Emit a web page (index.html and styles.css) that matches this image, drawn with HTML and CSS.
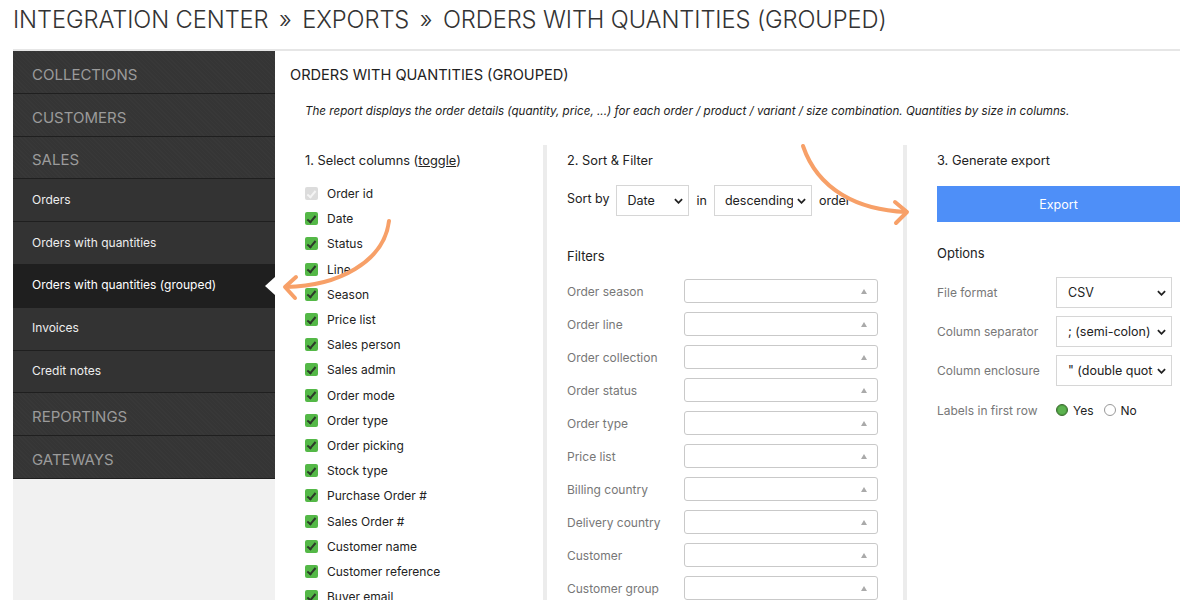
FILE: index.html
```
<html>
<head>
    <title>Integration Center - Exports</title>
    <link rel="stylesheet" href="styles.css">
</head>
<body>
    <h1 class="crumbs">INTEGRATION CENTER <span class="sep">&raquo;</span> EXPORTS <span class="sep">&raquo;</span> ORDERS WITH QUANTITIES (GROUPED)</h1>

    <div class="layout">
        <aside class="sidebar">
            <nav class="nav">
                <a class="nav-cat">COLLECTIONS</a>
                <a class="nav-cat">CUSTOMERS</a>
                <a class="nav-cat">SALES</a>
                <a class="nav-item">Orders</a>
                <a class="nav-item">Orders with quantities</a>
                <a class="nav-item active">Orders with quantities (grouped)</a>
                <a class="nav-item">Invoices</a>
                <a class="nav-item">Credit notes</a>
                <a class="nav-cat">REPORTINGS</a>
                <a class="nav-cat">GATEWAYS</a>
            </nav>
        </aside>

        <main class="content">
            <h2 class="page-title">ORDERS WITH QUANTITIES (GROUPED)</h2>
            <p class="desc">The report displays the order details (quantity, price, ...) for each order / product / variant / size combination. Quantities by size in columns.</p>

            <div class="columns">
                <section class="col col-columns">
                    <h3>1. Select columns (<u>toggle</u>)</h3>
                    <ul class="checks">
                        <li><span class="cb disabled"></span>Order id</li>
                        <li><span class="cb"></span>Date</li>
                        <li><span class="cb"></span>Status</li>
                        <li><span class="cb"></span>Line</li>
                        <li><span class="cb"></span>Season</li>
                        <li><span class="cb"></span>Price list</li>
                        <li><span class="cb"></span>Sales person</li>
                        <li><span class="cb"></span>Sales admin</li>
                        <li><span class="cb"></span>Order mode</li>
                        <li><span class="cb"></span>Order type</li>
                        <li><span class="cb"></span>Order picking</li>
                        <li><span class="cb"></span>Stock type</li>
                        <li><span class="cb"></span>Purchase Order #</li>
                        <li><span class="cb"></span>Sales Order #</li>
                        <li><span class="cb"></span>Customer name</li>
                        <li><span class="cb"></span>Customer reference</li>
                        <li><span class="cb"></span>Buyer email</li>
                    </ul>
                </section>

                <section class="col col-filter">
                    <h3>2. Sort &amp; Filter</h3>
                    <div class="sort-row">
                        <span class="sort-label">Sort by</span>
                        <span class="select sel-date"><span class="val">Date</span><svg class="chev" viewBox="0 0 10 6"><path d="M1 1l4 4 4-4"/></svg></span>
                        <span>in</span>
                        <span class="select sel-order"><span class="val">descending</span><svg class="chev" viewBox="0 0 10 6"><path d="M1 1l4 4 4-4"/></svg></span>
                        <span>order</span>
                    </div>

                    <h4>Filters</h4>
                    <div class="filters">
                        <label>Order season</label><span class="combo"></span>
                        <label>Order line</label><span class="combo"></span>
                        <label>Order collection</label><span class="combo"></span>
                        <label>Order status</label><span class="combo"></span>
                        <label>Order type</label><span class="combo"></span>
                        <label>Price list</label><span class="combo"></span>
                        <label>Billing country</label><span class="combo"></span>
                        <label>Delivery country</label><span class="combo"></span>
                        <label>Customer</label><span class="combo"></span>
                        <label>Customer group</label><span class="combo"></span>
                    </div>
                </section>

                <section class="col col-export">
                    <h3>3. Generate export</h3>
                    <button class="export-btn">Export</button>

                    <h4>Options</h4>
                    <div class="options">
                        <label>File format</label>
                        <span class="select"><span class="val">CSV</span><svg class="chev" viewBox="0 0 10 6"><path d="M1 1l4 4 4-4"/></svg></span>
                        <label>Column separator</label>
                        <span class="select"><span class="val">; (semi-colon)</span><svg class="chev" viewBox="0 0 10 6"><path d="M1 1l4 4 4-4"/></svg></span>
                        <label>Column enclosure</label>
                        <span class="select"><span class="val">" (double quote)</span><svg class="chev" viewBox="0 0 10 6"><path d="M1 1l4 4 4-4"/></svg></span>
                        <label class="radio-label">Labels in first row</label>
                        <span class="radios">
                            <span class="radio on"></span>Yes
                            <span class="radio"></span>No
                        </span>
                    </div>
                </section>
            </div>
        </main>
    </div>

    <!-- annotation arrows drawn over the page -->
    <svg class="arrows" width="1200" height="600" viewBox="0 0 1200 600">
        <path d="M389 221 C 384 262, 338 286, 286 287"/>
        <path d="M296 277 L 285 287 L 295 298"/>
        <path d="M803 146 C 818 190, 858 210, 906 212"/>
        <path d="M895 202 L 907 212 L 896 223"/>
    </svg>
</body>
</html>
```

FILE: styles.css
```
body {
    margin: 0;
    background: #fff;
    font-family: 'Inter', 'Liberation Sans', sans-serif;
    color: #222;
    height: 600px;
    overflow: hidden;
    position: relative;
}
.crumbs {
    margin: 0;
    padding: 5px 0 0 13px;
    height: 44px;
    font-size: 23.7px;
    font-weight: 300;
    color: #333;
    letter-spacing: -0.1px;
}
.crumbs .sep { margin: 0 4px; }
.layout {
    display: flex;
    margin: 0 20px 0 13px;
    border-top: 2px solid #e6e6e6;
    height: 560px;
}

/* sidebar */
.sidebar {
    width: 262px;
    flex-shrink: 0;
    background: #f1f1f1;
}
.nav a {
    display: flex;
    align-items: center;
    box-sizing: border-box;
    height: 42.8px;
    padding-left: 19px;
    border-bottom: 1px solid #1f1f1f;
    position: relative;
}
.nav-cat {
    background: #353535 repeating-linear-gradient(45deg, rgba(255,255,255,0.015) 0 1px, transparent 1px 3px);
    color: #9b9b9b;
    font-size: 15px;
    padding-top: 5px;
}
.nav-item {
    background: #333;
    color: #eee;
    font-size: 12px;
    padding-bottom: 2px;
}
.nav-item.active { background: #1f1f1f; color: #fff; }
.nav-item.active::after {
    content: '';
    position: absolute;
    right: 0;
    top: 12px;
    border-style: solid;
    border-width: 9px 10px 9px 0;
    border-color: transparent #fff transparent transparent;
}

/* main */
.content { flex: 1; padding-left: 15px; }
.page-title {
    margin: 15px 0 0;
    font-size: 14.6px;
    font-weight: 400;
    color: #222;
}
.desc {
    margin: 20px 0 0 15px;
    font-size: 11.6px;
    font-style: italic;
    color: #222;
}
.columns {
    display: flex;
    margin: 27px 0 0 15px;
}
.col { padding-top: 8px; }
.col h3 {
    margin: 0;
    font-size: 12.8px;
    font-weight: 400;
    line-height: 16px;
}
.col h4 {
    margin: 0;
    font-size: 13px;
    font-weight: 400;
}
.col-columns { width: 238px; border-right: 4px solid #ececec; }
.col-filter { width: 311px; padding-left: 20px; padding-right: 25px; border-right: 4px solid #ececec; }
.col-export { flex: 1; padding-left: 30px; }

.checks { list-style: none; margin: 12px 0 0; padding: 0; }
.checks li {
    display: flex;
    align-items: center;
    height: 25.2px;
    font-size: 12px;
    color: #222;
}
.cb {
    width: 13px;
    height: 13px;
    border-radius: 2px;
    background: #54b847;
    margin-right: 9px;
    position: relative;
}
.cb::after {
    content: '';
    position: absolute;
    left: 4px;
    top: 1.5px;
    width: 3px;
    height: 7px;
    border: solid #2d3a2a;
    border-width: 0 2px 2px 0;
    transform: rotate(40deg);
}
.cb.disabled { background: #dcdcdc; }
.cb.disabled::after { border-color: #f4f4f4; }

.sort-row {
    display: flex;
    align-items: center;
    gap: 7px;
    margin-top: 16px;
    font-size: 12.5px;
}
.sort-label { margin-top: -4px; }
.select {
    display: flex;
    align-items: center;
    box-sizing: border-box;
    height: 31px;
    padding: 0 5px 0 10px;
    border: 1px solid #d6d6d6;
    background: #fff;
    font-size: 12.5px;
    color: #222;
}
.select .val {
    flex: 1;
    white-space: nowrap;
    overflow: hidden;
}
.chev {
    width: 9px;
    height: 6px;
    flex-shrink: 0;
    margin-left: 4px;
    fill: none;
    stroke: #222;
    stroke-width: 2;
}
.sel-date { width: 73px; }
.sel-order { width: 98px; }
.col-filter h4 { margin-top: 32px; }
.filters {
    display: grid;
    grid-template-columns: 117px 194px;
    row-gap: 9px;
    margin-top: 15px;
    align-items: center;
}
.filters label { font-size: 12px; color: #777; }
.combo {
    height: 22px;
    border: 1px solid #c9c9c9;
    border-radius: 3px;
    position: relative;
}
.combo::after {
    content: '';
    position: absolute;
    right: 10px;
    top: 9px;
    border-style: solid;
    border-width: 0 3px 5px 3px;
    border-color: transparent transparent #aaa transparent;
}

.export-btn {
    display: block;
    width: 100%;
    height: 36px;
    margin-top: 17px;
    border: none;
    background: #4e8ff8;
    color: #fff;
    font-family: inherit;
    font-size: 12.5px;
}
.col-export h4 { margin-top: 23px; }
.options {
    display: grid;
    grid-template-columns: 119px 116px;
    row-gap: 8px;
    margin-top: 16px;
    align-items: center;
}
.options label { font-size: 12px; color: #777; }
.options .select { padding-left: 11px; }
.options .radio-label { margin-top: 5px; }
.radios {
    display: flex;
    align-items: center;
    font-size: 12px;
    color: #222;
    height: 22px;
    margin-top: 5px;
}
.radio {
    width: 10px;
    height: 10px;
    border: 1px solid #999;
    border-radius: 50%;
    margin-right: 5px;
    margin-left: 10px;
    background: #fff;
}
.radio.on {
    margin-left: 0;
    background: #5cb24f;
    border-color: #3e6b33;
    box-shadow: inset 0 0 0 1px #4a9b3e;
}

.arrows {
    position: absolute;
    left: 0;
    top: 0;
    fill: none;
    stroke: #f7a068;
    stroke-width: 4;
    stroke-linecap: round;
    stroke-linejoin: round;
    pointer-events: none;
}
```
